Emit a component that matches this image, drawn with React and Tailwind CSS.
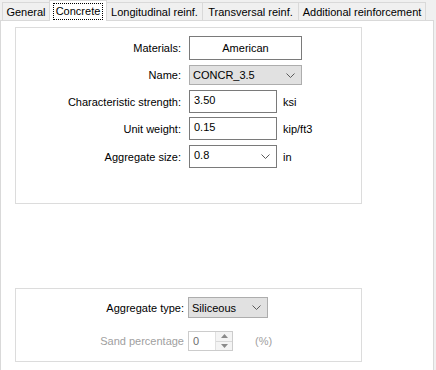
import React from "react";

function Chevron({ className = "" }) {
  return (
    <svg width="9" height="5" viewBox="0 0 9 5" className={className}>
      <path d="M0.5 0.5 L4.5 4.5 L8.5 0.5" fill="none" stroke="#5a5a5a" strokeWidth="1" />
    </svg>
  );
}

const tabs = [
  { label: "General", w: "w-[48px]" },
  { label: "Concrete", w: "w-[58px]", active: true },
  { label: "Longitudinal reinf.", w: "w-[97px]" },
  { label: "Transversal reinf.", w: "w-[97px]" },
  { label: "Additional reinforcement", w: "w-[128px]" },
];

function Label({ children, disabled, wide }) {
  return (
    <div
      className={
        (wide ? "w-[169px]" : "w-[166px]") +
        " shrink-0 pr-[1px] text-right whitespace-nowrap " +
        (disabled ? "text-[#a0a0a0]" : "text-[#000]")
      }
    >
      {children}
    </div>
  );
}

export default function App() {
  return (
    <div
      className="w-[436px] h-[370px] bg-[#f0f0f0] text-[11px] leading-[14px] text-black overflow-hidden"
      style={{ fontFamily: '"Segoe UI", "Liberation Sans", Arial, sans-serif' }}
    >
      {/* tab strip */}
      <div className="flex h-[20px] pl-[2px] items-end">
        {tabs.map((t) =>
          t.active ? (
            <div
              key={t.label}
              className={t.w + " relative z-10 h-[21px] -mb-px bg-white border border-b-0 border-[#d9d9d9] flex items-start justify-center pt-[2px] -ml-px"}
            >
              <span className="border border-dotted border-black px-[2px] pb-[1px] leading-[14px]">{t.label}</span>
            </div>
          ) : (
            <div
              key={t.label}
              className={t.w + " h-[18px] bg-[#f0f0f0] border border-b-0 border-[#d9d9d9] flex items-center justify-center -ml-px first:ml-0"}
            >
              <span className="whitespace-nowrap">{t.label}</span>
            </div>
          )
        )}
      </div>
      {/* panel */}
      <div className="w-[434px] h-[352px] bg-white border border-[#d9d9d9] pl-[14px] pt-[6px]">
        {/* group 1 */}
        <div className="w-[347px] h-[177px] border border-[#dcdcdc] pt-[8px]">
          <div className="flex items-center h-[24px]">
            <Label>Materials:</Label>
            <div className="ml-[7px] w-[113px] h-[24px] border border-[#7a7a7a] flex items-center justify-center">
              American
            </div>
          </div>
          <div className="flex items-center h-[20px] mt-[5px]">
            <Label>Name:</Label>
            <div className="ml-[7px] w-[113px] h-[20px] border border-[#adadad] bg-[#e1e1e1] flex items-center justify-between pl-[3px] pr-[6px]">
              <span>CONCR_3.5</span>
              <Chevron />
            </div>
          </div>
          <div className="flex items-center h-[23px] mt-[5px]">
            <Label>Characteristic strength:</Label>
            <div className="ml-[7px] w-[88px] h-[23px] border border-[#7a7a7a] flex items-center pl-[4px] pb-[3px]">
              3.50
            </div>
            <span className="ml-[6px]">ksi</span>
          </div>
          <div className="flex items-center h-[23px] mt-[4px]">
            <Label>Unit weight:</Label>
            <div className="ml-[7px] w-[88px] h-[23px] border border-[#7a7a7a] flex items-center pl-[4px] pb-[3px]">
              0.15
            </div>
            <span className="ml-[6px]">kip/ft3</span>
          </div>
          <div className="flex items-center h-[23px] mt-[5px]">
            <Label>Aggregate size:</Label>
            <div className="ml-[7px] w-[88px] h-[23px] border border-[#7a7a7a] flex items-center justify-between pl-[4px] pr-[6px] pb-[3px]">
              <span>0.8</span>
              <Chevron className="mt-[3px]" />
            </div>
            <span className="ml-[6px]">in</span>
          </div>
        </div>
        {/* group 2 */}
        <div className="mt-[84px] w-[347px] h-[74px] border border-[#dcdcdc] pt-[8px]">
          <div className="flex items-center h-[21px]">
            <Label wide>Aggregate type:</Label>
            <div className="ml-[3px] w-[80px] h-[21px] border border-[#adadad] bg-[#e1e1e1] flex items-center justify-between pl-[3px] pr-[6px]">
              <span>Siliceous</span>
              <Chevron />
            </div>
          </div>
          <div className="flex items-center h-[20px] mt-[13px]">
            <Label disabled wide>Sand percentage</Label>
            <div className="ml-[3px] w-[45px] h-[20px] border border-[#cccccc] flex items-stretch">
              <div className="flex-1 flex items-center pl-[4px] text-[#6d6d6d]">0</div>
              <div className="w-[17px] flex flex-col border-l border-[#e0e0e0] bg-[#f4f4f4]">
                <div className="flex-1 flex items-center justify-center border-b border-[#d9d9d9]">
                  <svg width="7" height="4" viewBox="0 0 7 4"><path d="M0 4 L3.5 0 L7 4 Z" fill="#8a8a8a" /></svg>
                </div>
                <div className="flex-1 flex items-center justify-center">
                  <svg width="7" height="4" viewBox="0 0 7 4"><path d="M0 0 L3.5 4 L7 0 Z" fill="#8a8a8a" /></svg>
                </div>
              </div>
            </div>
            <span className="ml-[22px] text-[#a0a0a0]">(%)</span>
          </div>
        </div>
      </div>
    </div>
  );
}
